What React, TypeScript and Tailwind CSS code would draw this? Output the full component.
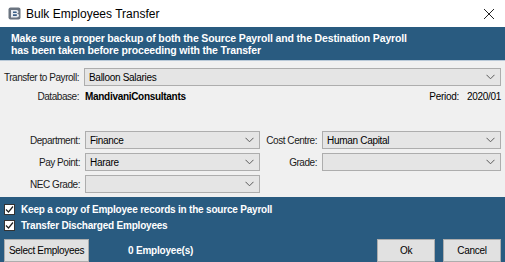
import React from 'react';

const font = { fontFamily: '"Liberation Sans", Arial, sans-serif' };

const Chevron = () => (
  <svg width="9" height="6" viewBox="0 0 9 6" className="shrink-0">
    <path d="M0.5 0.8 L4.5 4.8 L8.5 0.8" fill="none" stroke="#5a5a5a" strokeWidth="1" />
  </svg>
);

const Combo = ({ value = '', className = '' }: { value?: string; className?: string }) => (
  <div
    className={`h-[18px] flex items-center justify-between pl-[4px] pr-[5px] bg-[#e5e5e5] border border-[#adadad] text-[10px] tracking-[-0.3px] text-black ${className}`}
  >
    <span>{value}</span>
    <Chevron />
  </div>
);

const Label = ({ children }: { children: React.ReactNode }) => (
  <span className="text-right text-[10px] tracking-[-0.45px] text-[#1a1a1a] pr-[5px]">{children}</span>
);

const Check = ({ label }: { label: string }) => (
  <div className="flex items-center h-[17px]">
    <div className="w-[11px] h-[11px] ml-[4px] bg-white border border-[#333] flex items-center justify-center">
      <svg width="9" height="9" viewBox="0 0 9 9">
        <path d="M1 4.5 L3.5 7 L8 1.5" fill="none" stroke="#222" strokeWidth="1.2" />
      </svg>
    </div>
    <span className="ml-[6px] text-white font-bold text-[10px] tracking-[-0.2px]">{label}</span>
  </div>
);

const WinButton = ({ text, className = '' }: { text: string; className?: string }) => (
  <button
    className={`h-[23px] bg-[#e1e1e1] border border-[#adadad] text-[10px] tracking-[-0.3px] text-black ${className}`}
  >
    {text}
  </button>
);

export default function App() {
  return (
    <div className="w-[505px] h-[262px] flex flex-col bg-[#f0f0f0] overflow-hidden" style={font}>
      {/* title bar */}
      <div className="h-[27px] bg-white flex items-center justify-between pl-[8px] pr-[8px]">
        <div className="flex items-center gap-[5px]">
          <svg width="13" height="13" viewBox="0 0 13 13">
            <rect x="0.5" y="0.5" width="12" height="12" rx="2" fill="#6b7480" />
            <path d="M3 3 H8.5 Q10.5 3 10.5 5 Q10.5 6.3 9 6.5 Q11 6.8 11 8.5 Q11 10.5 8.5 10.5 H3 Z" fill="#e8ecf0" />
            <path d="M5 4.6 H8 Q8.8 4.6 8.8 5.4 Q8.8 6 8 6 H5 Z M5 7.3 H8.3 Q9.1 7.3 9.1 8.1 Q9.1 8.9 8.3 8.9 H5 Z" fill="#3b5f86" />
          </svg>
          <span className="text-[12px] text-black">Bulk Employees Transfer</span>
        </div>
        <svg width="12" height="12" viewBox="0 0 12 12" className="mr-[2px]">
          <path d="M1 1 L11 11 M11 1 L1 11" stroke="#222" strokeWidth="1" />
        </svg>
      </div>

      {/* warning banner */}
      <div className="h-[33px] bg-[#295b80] flex flex-col justify-center pl-[11px] text-white font-bold text-[10.5px] leading-[12px] tracking-[-0.15px]">
        <span>Make sure a proper backup of both the Source Payroll and the Destination Payroll</span>
        <span>has been taken before proceeding with the Transfer</span>
      </div>

      {/* form */}
      <div className="flex-1 border-t border-[#b9c9d8] pt-[7px] pr-[4px]">
        <div className="grid grid-cols-[84px_1fr] items-center">
          <Label>Transfer to Payroll:</Label>
          <Combo value="Balloon Salaries" />
        </div>
        <div className="grid grid-cols-[84px_1fr_auto] items-center h-[20px]">
          <Label>Database:</Label>
          <span className="font-bold text-[10px] tracking-[-0.3px] text-black pl-[1px]">MandivaniConsultants</span>
          <span className="text-[10px] tracking-[-0.3px] text-black">
            Period:<span className="ml-[8px]">2020/01</span>
          </span>
        </div>
        <div className="grid grid-cols-[85px_175px_62px_1fr] gap-y-[4px] items-center mt-[25px]">
          <Label>Department:</Label>
          <Combo value="Finance" />
          <Label>Cost Centre:</Label>
          <Combo value="Human Capital" />
          <Label>Pay Point:</Label>
          <Combo value="Harare" />
          <Label>Grade:</Label>
          <Combo />
          <Label>NEC Grade:</Label>
          <Combo />
        </div>
      </div>

      {/* footer */}
      <div className="h-[65px] bg-[#295b80] pt-[4px] flex flex-col">
        <Check label="Keep a copy of Employee records in the source Payroll" />
        <Check label="Transfer Discharged Employees" />
        <div className="flex items-center mt-[5px] pl-[4px] pr-[4px]">
          <WinButton text="Select Employees" className="w-[85px]" />
          <span className="ml-[39px] text-white font-bold text-[10px] tracking-[-0.2px]">0 Employee(s)</span>
          <div className="ml-auto flex gap-[8px]">
            <WinButton text="Ok" className="w-[58px]" />
            <WinButton text="Cancel" className="w-[58px]" />
          </div>
        </div>
      </div>
    </div>
  );
}
